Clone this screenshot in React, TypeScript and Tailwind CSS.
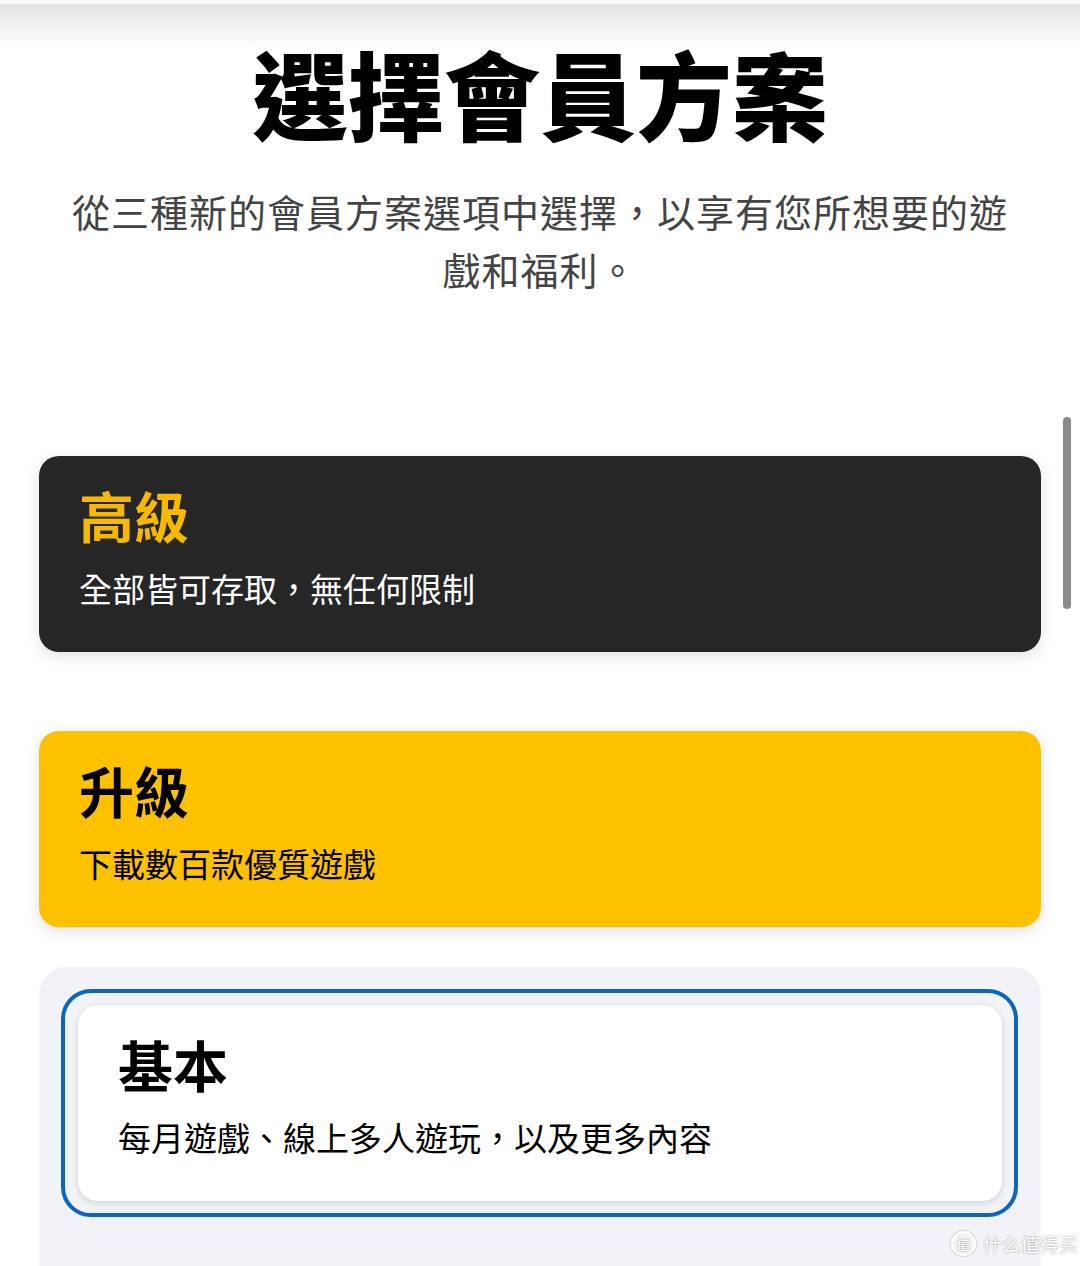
const font = { fontFamily: '"Noto Sans CJK TC", "Noto Sans", sans-serif' }

interface PlanCardProps {
  title: string
  desc: string
  className: string
  titleClass: string
  descClass: string
}

function PlanCard({ title, desc, className, titleClass, descClass }: PlanCardProps) {
  return (
    <div className={`h-[196px] rounded-[20px] px-10 pt-[26px] ${className}`}>
      <h2 className={`text-[55px] leading-[64px] font-bold ${titleClass}`}>{title}</h2>
      <p className={`mt-[20px] text-[33px] leading-[44px] ${descClass}`}>{desc}</p>
    </div>
  )
}

export default function App() {
  return (
    <div className="relative h-[1266px] w-[1080px] overflow-hidden bg-white" style={font}>
      {/* header shadow from the bar above */}
      <div className="pointer-events-none absolute inset-x-0 top-0 h-[52px]">
        <div className="h-[4px] bg-[#fafafa]"></div>
        <div className="h-[48px] bg-gradient-to-b from-[#e4e4e4] via-[#f3f3f3] to-white"></div>
      </div>

      {/* scroll indicator */}
      <div className="absolute left-[1063px] top-[417px] h-[192px] w-[8px] rounded-full bg-[#8a8a8a]"></div>

      <div className="relative flex flex-col items-center pt-[44px]">
        <h1 className="text-[96px] leading-[96px] font-black text-black">選擇會員方案</h1>
        <p className="mt-[42px] w-[960px] text-center text-[38px] leading-[58px] tracking-[1px] text-[#444444]">
          從三種新的會員方案選項中選擇，以享有您所想要的遊戲和福利。
        </p>
      </div>

      <div className="relative mx-[39px] mt-[158px] flex flex-col">
        <PlanCard
          title="高級"
          desc="全部皆可存取，無任何限制"
          className="bg-[#262626] shadow-[0_4px_16px_rgba(0,0,0,0.12)]"
          titleClass="text-[#f7b800]"
          descClass="text-white"
        />
        <div className="mt-[79px]">
          <PlanCard
            title="升級"
            desc="下載數百款優質遊戲"
            className="bg-[#fdc100] shadow-[0_4px_16px_rgba(0,0,0,0.12)]"
            titleClass="text-black"
            descClass="text-black"
          />
        </div>
        <div className="mt-[40px] h-[330px] rounded-[28px] bg-[#f2f3f7] pl-[22px] pr-[23px] pt-[22px]">
          <div className="rounded-[30px] border-4 border-[#0b66c0] pl-[13px] pr-[12px] py-[12px]">
            <PlanCard
              title="基本"
              desc="每月遊戲、線上多人遊玩，以及更多內容"
              className="bg-white shadow-[0_2px_6px_rgba(0,0,0,0.14)]"
              titleClass="text-black"
              descClass="text-black"
            />
          </div>
        </div>
      </div>

      {/* watermark */}
      <div className="absolute left-[951px] top-[1231px] flex items-center gap-[7px] text-white [text-shadow:0_0_2px_rgba(0,0,0,0.45)]">
        <div className="flex h-[25px] w-[25px] items-center justify-center rounded-full border-2 border-white text-[14px] leading-none shadow-[0_0_2px_rgba(0,0,0,0.4)]">
          值
        </div>
        <span className="text-[19px] leading-none">什么值得买</span>
      </div>
    </div>
  )
}
